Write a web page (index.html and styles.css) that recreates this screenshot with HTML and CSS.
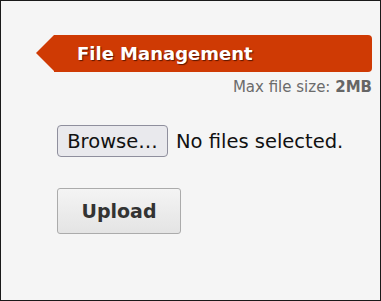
FILE: index.html
```html
<!DOCTYPE html>
<html>
<head>
<meta charset="utf-8">
<link rel="stylesheet" href="styles.css">
</head>
<body>
<div class="panel">
  <div class="banner"><span class="banner-title">File Management</span></div>
  <div class="meta">Max file size: <b>2MB</b></div>
  <div class="file-row">
    <button class="browse" type="button">Browse…</button>
    <span class="file-status">No files selected.</span>
  </div>
  <div class="actions">
    <button class="upload" type="button">Upload</button>
  </div>
</div>
</body>
</html>
```

FILE: styles.css
```css
html, body {
  margin: 0;
  padding: 0;
  background: #f5f5f5;
}
.panel {
  box-sizing: border-box;
  width: 381px;
  height: 301px;
  border: 1px solid #1a1a1a;
  background: #f5f5f5;
  padding-top: 34px;
  display: flex;
  flex-direction: column;
  font-family: "DejaVu Sans", sans-serif;
}
.banner {
  position: relative;
  margin-left: 53px;
  margin-right: 8px;
  height: 37px;
  background: #cf3a04;
  border-radius: 0 4px 4px 0;
  display: flex;
  align-items: center;
  padding-left: 23px;
}
.banner::before {
  content: "";
  position: absolute;
  left: -18px;
  top: 0;
  width: 0;
  height: 0;
  border-top: 18.5px solid transparent;
  border-bottom: 18.5px solid transparent;
  border-right: 18px solid #cf3a04;
}
.banner-title {
  color: #fff;
  font-weight: bold;
  font-size: 18px;
  line-height: 22px;
  text-shadow: 1px 1px 1px rgba(70, 15, 0, 0.85);
}
.meta {
  margin-top: 6px;
  margin-right: 8px;
  text-align: right;
  font-size: 15px;
  line-height: 18px;
  color: #6b6b6b;
}
.meta b {
  font-weight: bold;
  color: #666;
}
.file-row {
  margin-top: 29px;
  margin-left: 56px;
  display: flex;
  align-items: center;
  gap: 8px;
}
.browse {
  box-sizing: border-box;
  width: 111px;
  height: 32px;
  padding: 0;
  margin: 0;
  font-family: "DejaVu Sans", sans-serif;
  font-size: 19.5px;
  color: #111;
  background: #e9e9ed;
  border: 1px solid #8f8f9d;
  border-radius: 4px;
}
.file-status {
  font-size: 19.5px;
  color: #111;
}
.actions {
  margin-top: 31px;
  margin-left: 56px;
}
.upload {
  box-sizing: border-box;
  width: 124px;
  height: 46px;
  margin: 0;
  padding: 0;
  font-family: "DejaVu Sans", sans-serif;
  font-weight: bold;
  font-size: 19px;
  color: #333;
  background: linear-gradient(#f4f4f4, #e4e4e4);
  border: 1px solid #ababab;
  border-radius: 3px;
}
```
